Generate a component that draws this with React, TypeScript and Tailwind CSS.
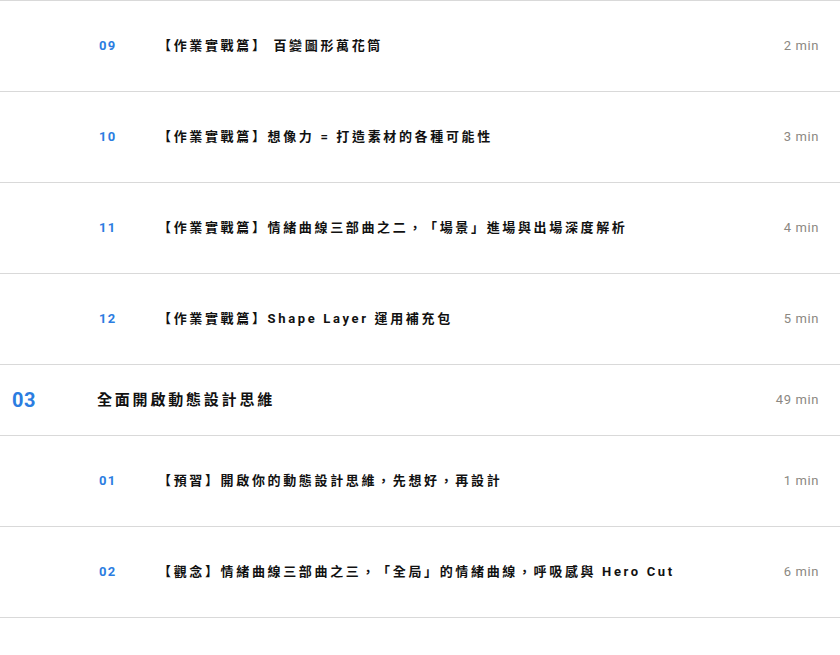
import React from 'react';

type Row = { kind: 'lesson' | 'chapter'; no: string; title: string; time: string };

const rows: Row[] = [
  { kind: 'lesson', no: '09', title: '【作業實戰篇】 百變圖形萬花筒', time: '2 min' },
  { kind: 'lesson', no: '10', title: '【作業實戰篇】想像力 = 打造素材的各種可能性', time: '3 min' },
  { kind: 'lesson', no: '11', title: '【作業實戰篇】情緒曲線三部曲之二，「場景」進場與出場深度解析', time: '4 min' },
  { kind: 'lesson', no: '12', title: '【作業實戰篇】Shape Layer 運用補充包', time: '5 min' },
  { kind: 'chapter', no: '03', title: '全面開啟動態設計思維', time: '49 min' },
  { kind: 'lesson', no: '01', title: '【預習】開啟你的動態設計思維，先想好，再設計', time: '1 min' },
  { kind: 'lesson', no: '02', title: '【觀念】情緒曲線三部曲之三，「全局」的情緒曲線，呼吸感與 Hero Cut', time: '6 min' },
];

const font = { fontFamily: 'Roboto, "Noto Sans CJK TC", sans-serif' };

const App: React.FC = () => {
  return (
    <div
      className="w-[840px] h-[655px] bg-white overflow-hidden border-t border-[#d9d9d9] [text-spacing-trim:space-all]"
      style={font}
    >
      {rows.map((r, i) =>
        r.kind === 'lesson' ? (
          <div key={i} className="h-[91px] flex items-center border-b border-[#d9d9d9]">
            <div className="w-[158px] pl-[99px] text-[13px] font-bold text-[#2b7de1] tracking-[1.2px]">{r.no}</div>
            <div className="flex-1 text-[13px] font-bold text-[#111] tracking-[2.65px]">{r.title}</div>
            <div className="pr-[21px] text-[13px] text-[#8c8882] tracking-[0.6px]">{r.time}</div>
          </div>
        ) : (
          <div key={i} className="h-[71px] flex items-center border-b border-[#d9d9d9]">
            <div className="w-[97px] pl-[12px] text-[20px] font-bold text-[#2b7de1] tracking-[0.5px]">{r.no}</div>
            <div className="flex-1 text-[15px] font-bold text-[#111] tracking-[2.8px]">{r.title}</div>
            <div className="pr-[21px] text-[13px] text-[#8c8882] tracking-[0.6px]">{r.time}</div>
          </div>
        )
      )}
    </div>
  );
};

export default App;
